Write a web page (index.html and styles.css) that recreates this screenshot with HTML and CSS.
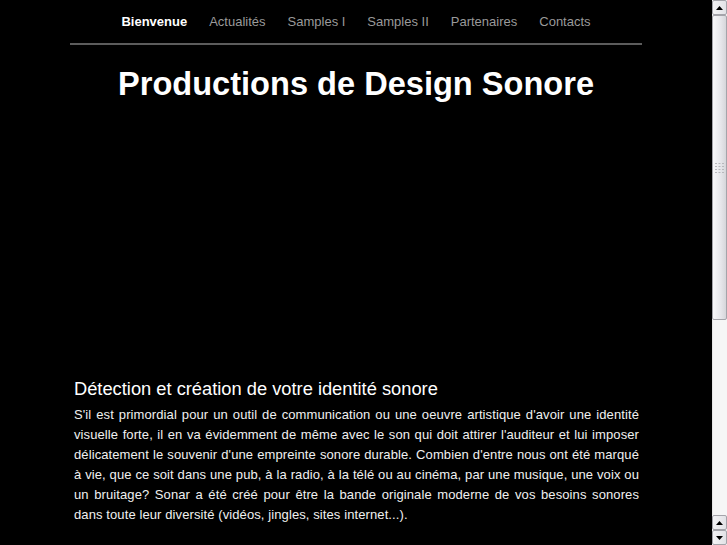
FILE: index.html
```html
<!DOCTYPE html>
<html lang="fr">
<head>
<meta charset="utf-8">
<title>Productions de Design Sonore</title>
<link rel="stylesheet" href="styles.css">
</head>
<body>
<div class="page">
  <nav class="nav">
    <a class="nav-item active" href="#">Bienvenue</a>
    <a class="nav-item" href="#">Actualités</a>
    <a class="nav-item" href="#">Samples I</a>
    <a class="nav-item" href="#">Samples II</a>
    <a class="nav-item" href="#">Partenaires</a>
    <a class="nav-item" href="#">Contacts</a>
  </nav>
  <h1 class="title">Productions de Design Sonore</h1>
  <div class="media"></div>
  <section class="content">
    <h2 class="subtitle">Détection et création de votre identité sonore</h2>
    <p class="text">S'il est primordial pour un outil de communication ou une oeuvre artistique d'avoir une identité visuelle forte, il en va évidemment de même avec le son qui doit attirer l'auditeur et lui imposer délicatement le souvenir d'une empreinte sonore durable. Combien d'entre nous ont été marqué à vie, que ce soit dans une pub, à la radio, à la télé ou au cinéma, par une musique, une voix ou un bruitage? Sonar a été créé pour être la bande originale moderne de vos besoins sonores dans toute leur diversité (vidéos, jingles, sites internet...).</p>
  </section>
</div>
<div class="scrollbar" aria-hidden="true">
  <div class="sb-btn">
    <svg width="7" height="4" viewBox="0 0 7 4"><polygon points="0,4 3.5,0 7,4" fill="#000"/></svg>
  </div>
  <div class="sb-track">
    <div class="sb-thumb">
      <svg width="9" height="10" viewBox="0 0 9 10">
        <g fill="#b8b8bc">
          <rect x="0" y="0" width="2" height="1"/><rect x="3.5" y="0" width="2" height="1"/><rect x="7" y="0" width="2" height="1"/>
          <rect x="0" y="3" width="2" height="1"/><rect x="3.5" y="3" width="2" height="1"/><rect x="7" y="3" width="2" height="1"/>
          <rect x="0" y="6" width="2" height="1"/><rect x="3.5" y="6" width="2" height="1"/><rect x="7" y="6" width="2" height="1"/>
          <rect x="0" y="9" width="2" height="1"/><rect x="3.5" y="9" width="2" height="1"/><rect x="7" y="9" width="2" height="1"/>
        </g>
      </svg>
    </div>
  </div>
  <div class="sb-btn">
    <svg width="7" height="4" viewBox="0 0 7 4"><polygon points="0,4 3.5,0 7,4" fill="#000"/></svg>
  </div>
  <div class="sb-btn">
    <svg width="7" height="4" viewBox="0 0 7 4"><polygon points="0,0 3.5,4 7,0" fill="#000"/></svg>
  </div>
</div>
</body>
</html>
```
FILE: styles.css
```css
html {
  background: #000;
}
body {
  margin: 0;
  padding-right: 15px;
  background: #000;
  color: #fff;
  font-family: "Liberation Sans", Arial, sans-serif;
}
.page {
  width: 572px;
  margin: 0 auto;
}
.nav {
  display: flex;
  justify-content: center;
  height: 45px;
  padding-top: 14px;
  box-sizing: border-box;
  border-bottom: 2px solid #5c5c5c;
}
.nav-item {
  padding: 0 11px;
  font-size: 13px;
  color: #9a9a9a;
  text-decoration: none;
  line-height: 16px;
}
.nav-item.active {
  color: #fff;
  font-weight: bold;
}
.title {
  margin: 20px 0 0;
  text-align: center;
  font-size: 32.6px;
  line-height: 38px;
  font-weight: bold;
}
.media {
  height: 274px;
}
.content {
  padding: 0 3px 0 4px;
}
.subtitle {
  margin: 0;
  font-size: 18.3px;
  font-weight: normal;
  line-height: 24px;
}
.text {
  margin: 4px 0 360px;
  font-size: 13px;
  letter-spacing: 0.1px;
  line-height: 20px;
  text-align: justify;
  color: #f0f0f0;
}

.scrollbar {
  position: fixed;
  top: 0;
  right: 0;
  width: 15px;
  height: 100%;
  display: flex;
  flex-direction: column;
  background: #f5f5f5;
}
.sb-btn {
  flex: none;
  height: 15px;
  box-sizing: border-box;
  border: 1px solid #a4a4aa;
  border-radius: 2px;
  background: linear-gradient(to right, #f4f4f6, #e2e2e6);
  display: flex;
  align-items: center;
  justify-content: center;
}
.sb-track {
  flex: 1;
  background: #f6f6f6;
  border-left: 1px solid #e6e6e6;
}
.sb-thumb {
  height: 305px;
  box-sizing: border-box;
  margin-left: -1px;
  border: 1px solid #a4a4aa;
  border-radius: 2px;
  background: linear-gradient(to right, #f8f8fa, #e6e6ea 60%, #d6d6da);
  display: flex;
  align-items: center;
  justify-content: center;
}
```
